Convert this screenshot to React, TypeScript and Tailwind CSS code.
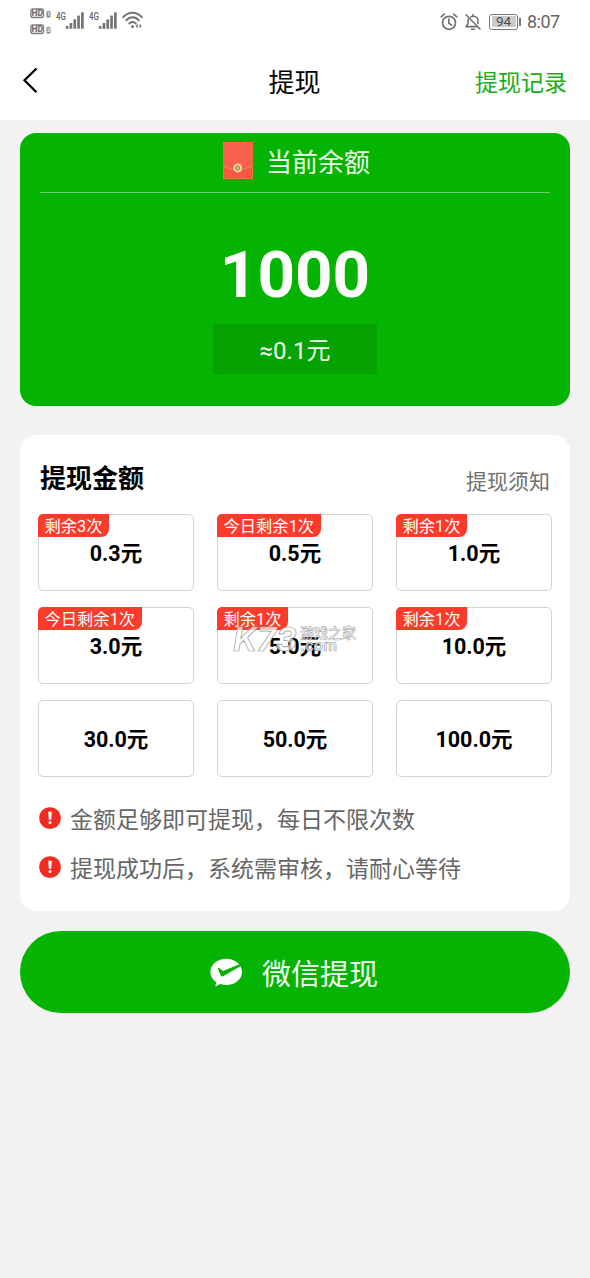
import React from 'react';

type Amount = { label: string; tag?: string; marked?: boolean };

const amounts: Amount[] = [
  { label: '0.3元', tag: '剩余3次' },
  { label: '0.5元', tag: '今日剩余1次' },
  { label: '1.0元', tag: '剩余1次' },
  { label: '3.0元', tag: '今日剩余1次' },
  { label: '5.0元', tag: '剩余1次', marked: true },
  { label: '10.0元', tag: '剩余1次' },
  { label: '30.0元' },
  { label: '50.0元' },
  { label: '100.0元' },
];

const tips = ['金额足够即可提现，每日不限次数', '提现成功后，系统需审核，请耐心等待'];

function SimBadges() {
  return (
    <svg width="22" height="27" viewBox="0 0 22 27" fill="none">
      {[0, 16].map((y, i) => (
        <g key={y}>
          <rect x="0.900" y={y + 0.9} width="12.600" height="8.600" rx="1.800" fill="#f2f2f2" stroke="#7c7c7c" strokeWidth="1.300" />
          <text x="7.200" y={y + 8.2} textAnchor="middle" fontSize="8.500" fontWeight="800" fill="#707070" fontFamily="Roboto">HD</text>
          <rect x="16.500" y={y + 3} width="4" height="6.500" rx="1" fill="#858585" />
          <text x="18.500" y={y + 8.4} textAnchor="middle" fontSize="5.500" fontWeight="700" fill="#fff" fontFamily="Roboto">{i + 1}</text>
        </g>
      ))}
    </svg>
  );
}

function Signal() {
  return (
    <svg width="29" height="20" viewBox="0 0 29 20">
      <text x="0" y="9.500" fontSize="10" fontWeight="500" fill="#666" fontFamily="Roboto" textLength="10" lengthAdjust="spacingAndGlyphs">4G</text>
      {[
        [9.8, 16],
        [13.6, 13],
        [17.4, 9.2],
        [21.2, 5.6],
        [25, 2.2],
      ].map(([x, y]) => (
        <rect key={x} x={x} y={y} width="2.700" height={18.8 - y} rx="0.600" fill="#747474" />
      ))}
    </svg>
  );
}

function Wifi() {
  return (
    <svg width="22" height="18" viewBox="0 0 22 18" fill="none" stroke="#727272" strokeWidth="1.900" strokeLinecap="round">
      <path d="M1.200 6.200C6.400.2 14.400.2 19.800 6.200" />
      <path d="M4.200 9.400C8 5.200 13.200 5.200 16.900 9.400" />
      <path d="M7.300 12.500C9.300 10.500 11.900 10.500 13.800 12.500" />
      <circle cx="10.500" cy="15.400" r="1.500" fill="#727272" stroke="none" />
      <path d="M15.800 12.700v4.600l-2.300-2.300zM17.500 12.700v4.600l2.300-2.300z" fill="#727272" stroke="none" />
    </svg>
  );
}

function Alarm() {
  return (
    <svg width="18" height="18" viewBox="0 0 18 18" fill="none" stroke="#707070" strokeWidth="1.700" strokeLinecap="round">
      <circle cx="9" cy="9.800" r="6.500" />
      <path d="M8.800 6v4.200l2.900 1.900M1.200 3.800 4.300 1.200M16.800 3.800l-3.100-2.600" />
    </svg>
  );
}

function BellOff() {
  return (
    <svg width="18" height="18" viewBox="0 0 18 18" fill="none" stroke="#707070" strokeWidth="1.600" strokeLinecap="round" strokeLinejoin="round">
      <path d="M2 1.800 16 16M4.300 6.200C4 7.500 4 9 4 10.800L2 13.600h11M14 10.500V8c0-2.800-1.800-4.800-4.600-4.800-.9 0-1.700.2-2.400.6M9 3V1.500M7.600 16.300h2.800" />
    </svg>
  );
}

function Envelope() {
  return (
    <svg width="30" height="37" viewBox="0 0 30 37" fill="none">
      <rect width="30" height="37" rx="0.800" fill="#d99a48" />
      <rect x="0.500" y="0.500" width="29" height="36" rx="0.600" fill="#f9573f" />
      <path d="M.5.5h29v23.500Q15 31.500.5 24z" fill="#f8604b" />
      <path d="M.5 24Q15 31.500 29.500 24" stroke="#dc9a58" strokeWidth="0.800" />
      <circle cx="14.700" cy="26" r="4.500" fill="#f2cf98" />
      <circle cx="14.700" cy="26" r="2" fill="#dcb47a" stroke="#94804e" strokeWidth="0.900" />
    </svg>
  );
}

function Alert() {
  return (
    <svg width="22" height="22" viewBox="0 0 22 22">
      <circle cx="11" cy="11" r="10.800" fill="#f02b22" />
      <path d="M9.200 4.800h3.600l-.6 8H9.800z" fill="#fff" />
      <circle cx="11" cy="15.600" r="1.500" fill="#fff" />
    </svg>
  );
}

function WeChatPay() {
  return (
    <svg width="33" height="29" viewBox="0 0 33 29">
      <path
        d="M16.200.8C7.500.8.4 6.600.4 13.900c0 4.200 2.300 7.800 5.900 10.300L5.200 28.400l5.200-2.300c1.800.6 3.700.9 5.800.9 8.700 0 15.800-5.800 15.800-13.100S24.900.8 16.200.8z"
        fill="#fff"
      />
      <path d="M7.800 10.200c.8-.5 1.500-.2 2.100.4l3 2.400 17.200-7 1.500 1.600-18.500 10.600c-1 .6-2 .2-2.500-.8z" fill="#05b303" />
    </svg>
  );
}

function Watermark() {
  return (
    <svg className="pointer-events-none absolute left-[12px] top-[15px]" width="130" height="34" viewBox="-2 0 130 34" fill="#ffffffb8" stroke="#9c9c9c" strokeWidth="0.700">
      <text x="1" y="28" fontSize="33" fontStyle="italic" fontWeight="700" fontFamily="Inter" textLength="64" lengthAdjust="spacingAndGlyphs">K73</text>
      <text x="68" y="15" fontSize="14" fontWeight="500" fontFamily="'Noto Sans CJK SC'" strokeWidth="0.500">游戏之家</text>
      <text x="68" y="28" fontSize="16" fontWeight="600" fontFamily="Inter" textLength="37" lengthAdjust="spacingAndGlyphs">.com</text>
    </svg>
  );
}

function AmountBox({ label, tag, marked }: Amount) {
  return (
    <button className="relative flex h-[77px] items-center justify-center rounded-[5px] border border-[#d4d4d4] bg-white pt-[2px] text-[21.500px] leading-[30px] font-bold text-black">
      {label}
      {tag && (
        <span className="absolute -left-px -top-px h-[23px] rounded-tl-[5px] rounded-br-[8px] bg-[#fc3b2b] px-[6.500px] pt-px text-[16.300px] leading-[23px] font-normal whitespace-nowrap text-white">
          {tag}
        </span>
      )}
      {marked && <Watermark />}
    </button>
  );
}

export default function App() {
  return (
    <div className="flex h-[1278px] w-[590px] flex-col bg-[#f2f2f2] font-[Roboto,'Noto_Sans_CJK_SC',sans-serif]">
      <header className="h-[120px] bg-white">
        <div className="flex h-[42px] items-start justify-between pr-[31px] pl-[30px]">
          <div className="flex items-start">
            <div className="pt-[8px]"><SimBadges /></div>
            <div className="flex gap-[4px] pt-[10px] pl-[4px]">
              <Signal />
              <Signal />
            </div>
            <div className="pt-[11px] pl-[4px]"><Wifi /></div>
          </div>
          <div className="flex items-center pt-[10px]">
            <Alarm />
            <div className="pl-[6px]"><BellOff /></div>
            <div className="ml-[7px] flex h-[16px] w-[29px] items-center justify-center rounded-[3px] border border-[#777] p-[1.500px]">
              <span className="flex h-full w-full items-center justify-center bg-[#cbcbcb] text-[13.500px] leading-none text-[#4c4c4c]">94</span>
            </div>
            <div className="ml-px h-[8px] w-[2px] bg-[#777]" />
            <span className="ml-[6px] w-[32px] pt-px text-[18px] leading-[22px] tracking-[-0.500px] text-[#666]">8:07</span>
          </div>
        </div>
        <div className="grid h-[78px] grid-cols-3 items-center pr-[23px] pl-[22px]">
          <svg width="18" height="28" viewBox="0 0 18 28" fill="none" stroke="#000" strokeWidth="2.300">
            <path d="M14.500 1.500 2.500 13.300l12 12" />
          </svg>
          <h1 className="pt-[4px] text-center text-[26px] leading-[36px] text-black">提现</h1>
          <a className="pt-[5px] text-right text-[23px] leading-[32px] text-[#1aad19]">提现记录</a>
        </div>
      </header>

      <main className="flex flex-col px-[20px] pt-[13px]">
        <section className="flex h-[273px] flex-col items-center rounded-[16px] bg-[#05b303] px-[20px] text-white">
          <div className="flex h-[60px] w-full items-center justify-center gap-[13px] border-b border-[#69d268] pb-[4px] pl-[3px]">
            <Envelope />
            <span className="pt-[4px] text-[26px] leading-[36px] text-[#ecffe9]">当前余额</span>
          </div>
          <div className="mt-[43px] text-[65.500px] leading-[78px] font-bold">1000</div>
          <div className="mt-[10px] flex h-[50px] w-[164px] items-center justify-center bg-[#04a302] pt-[4px] text-[24px] leading-[34px] text-[#f0fff0]">≈0.1元</div>
        </section>

        <section className="mt-[29px] h-[476px] rounded-[16px] bg-white px-[18px]">
          <div className="flex h-[79px] items-center justify-between px-[2px] pt-[9px]">
            <h2 className="text-[26px] leading-[36px] font-bold text-black">提现金额</h2>
            <a className="pt-[6px] text-[21px] leading-[30px] text-[#707070]">提现须知</a>
          </div>
          <div className="grid grid-cols-[156px_156px_156px] gap-x-[23px] gap-y-[16px]">
            {amounts.map((a) => (
              <AmountBox key={a.label} {...a} />
            ))}
          </div>
          <ul className="mt-[24px] flex flex-col gap-[16px] pl-px">
            {tips.map((t) => (
              <li key={t} className="flex h-[33px] items-center gap-[9px] text-[23px] leading-[33px] text-[#666]">
                <Alert />
                <span className="pt-[5px]">{t}</span>
              </li>
            ))}
          </ul>
        </section>

        <button className="mt-[20px] flex h-[82px] items-center justify-center gap-[19px] rounded-full bg-[#05b303] pr-[2px] text-[29px] leading-[40px] text-[#f4fff4]">
          <WeChatPay />
          <span className="pt-[5px]">微信提现</span>
        </button>
      </main>
    </div>
  );
}
